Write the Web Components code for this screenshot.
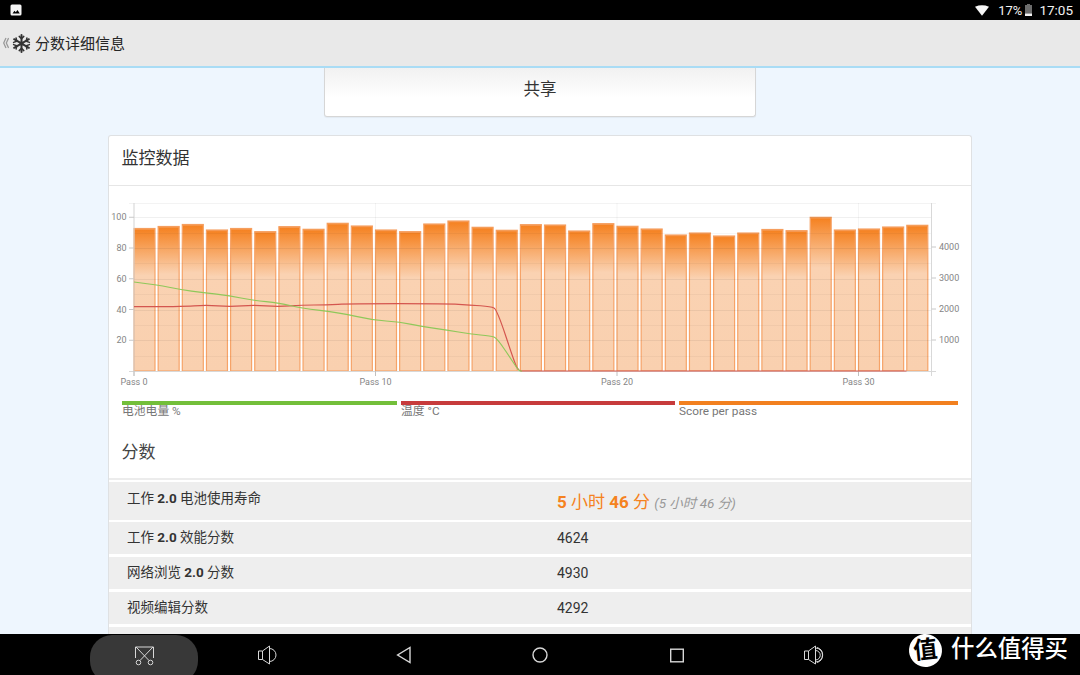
<!DOCTYPE html>
<html lang="zh">
<head>
<meta charset="utf-8">
<title>分数详细信息</title>
<style>
html,body{margin:0;padding:0;background:#000}
body{width:1080px;height:675px;overflow:hidden;font-family:Roboto,"Noto Sans CJK SC",sans-serif}
</style>
</head>
<body>
<app-shell>
  <status-bar></status-bar>
  <action-bar>分数详细信息</action-bar>
  <main-area>
    <share-button>共享</share-button>
    <info-card>
      <card-header>监控数据</card-header>
      <score-chart></score-chart>
      <chart-legend></chart-legend>
      <section-title>分数</section-title>
      <score-table>
        <score-row class="lead" label="工作 |2.0| 电池使用寿命"><b>5</b> 小时 <b>46</b> 分 <i>(5 小时 46 分)</i></score-row>
        <score-row label="工作 |2.0| 效能分数">4624</score-row>
        <score-row label="网络浏览 |2.0| 分数">4930</score-row>
        <score-row label="视频编辑分数">4292</score-row>
        <score-row label=""></score-row>
      </score-table>
    </info-card>
  </main-area>
  <nav-bar></nav-bar>
</app-shell>
<script>
const CJK = 'Roboto,"Noto Sans CJK SC",sans-serif';
function el(name, css, html, extra){
  class C extends HTMLElement{
    constructor(){super();const r=this.attachShadow({mode:'open'});r.innerHTML='<style>'+css+'</style>'+html;}
    connectedCallback(){ if(extra) extra.call(this,this.shadowRoot); }
  }
  customElements.define(name,C);
}
el('app-shell',`:host{display:flex;flex-direction:column;width:1080px;height:675px;position:relative;overflow:hidden;font-family:${CJK}}`,'<slot></slot>');

el('status-bar',`:host{display:flex;align-items:center;height:20px;background:#000;color:#f2f2f2;font-size:14px;flex:none;padding:0 7px 0 10px}
.sp{flex:1}svg{display:block}.pct{margin-left:9px;font-size:13px}.time{margin-left:7px;font-size:13.5px}.bat{margin-left:3px}`,
`<svg width="12" height="12" viewBox="0 0 12 12"><rect x="0.5" y="0.5" width="11" height="11" rx="1.5" fill="#f4f4f4"/><path d="M2.5 9.5 L4.5 6.8 L5.8 8.2 L7.5 6 L9.8 9.5Z" fill="#000"/></svg>
<span class="sp"></span>
<svg width="14" height="11" viewBox="0 0 15 11"><path d="M0 1.5Q7.5-1.5 15 1.5L7.5 11Z" fill="#f6f6f6"/></svg>
<span class="pct">17%</span>
<svg class="bat" width="7" height="12" viewBox="0 0 7 12"><path d="M2 0H5V1H7V12H0V1H2Z" fill="#6c6c6c"/><rect y="9.6" width="7" height="2.4" fill="#f4f4f4"/></svg>
<span class="time">17:05</span>`);

el('action-bar',`:host{display:flex;align-items:center;height:46px;flex:none;background:#e9e9e9;border-bottom:2px solid #a9dcf5;font-size:15px;color:#262626;padding:0 0 0 3px;box-sizing:content-box}
svg{display:block}.flake{margin-left:3px;margin-right:4px}.t{padding-bottom:1px}`,
`<svg width="6" height="12" viewBox="0 0 6 12"><path d="M3 1L.7 6 3 11M5.6 1L3.3 6 5.6 11" fill="none" stroke="#999" stroke-width="1.3"/></svg>
<svg class="flake" width="19" height="19" viewBox="0 0 19 19" fill="none" stroke="#333" stroke-width="2" stroke-linecap="round">
<path d="M9.5 1V18M2.1 5.2L16.9 13.8M2.1 13.8L16.9 5.2"/>
<path stroke-width="1.5" d="M7.2 2.4L9.5 4.6 11.8 2.4M7.2 16.6L9.5 14.4 11.8 16.6M1.6 8.4L4.7 7.2 4.1 4M17.4 10.6L14.3 11.8 14.9 15M1.6 10.6L4.7 11.8 4.1 15M17.4 8.4L14.3 7.2 14.9 4"/>
</svg><span class="t"><slot></slot></span>`);

el('main-area',`:host{display:flex;flex-direction:column;align-items:center;flex:1;min-height:0;overflow:hidden;background:#eef6fe}`,'<slot></slot>');

el('share-button',`:host{display:flex;align-items:center;justify-content:center;flex:none;box-sizing:border-box;width:432px;height:49px;padding-bottom:8px;background:linear-gradient(#f1f1f1,#fff 62%);border:1px solid #d6d6d6;border-top:none;border-radius:0 0 3px 3px;font-size:16.5px;color:#333;box-shadow:0 1px 1px rgba(0,0,0,.05)}`,'<slot></slot>');

el('info-card',`:host{display:block;flex:none;box-sizing:border-box;width:864px;height:520px;margin-top:18px;background:#fff;border:1px solid #dfe1e3;border-bottom:none;border-radius:3px 3px 0 0;overflow:hidden}`,'<slot></slot>');

el('card-header',`:host{display:flex;align-items:center;box-sizing:border-box;height:50px;padding:0 0 9px 12.5px;font-size:17px;color:#333;border-bottom:1px solid #e6e6e6}`,'<slot></slot>');

el('score-chart',`:host{display:block;height:215px}svg{display:block;font-family:Roboto,sans-serif}`,
`<svg id="s" width="862" height="215" viewBox="109 186 862 215"></svg>`,
function(r){
  const svg=r.getElementById('s');
  const tops=[228.5,226.5,224.5,230,228.5,231.7,226.7,229.3,223.3,226,230,231.7,224,221,227.3,230.3,224.7,225,231,223.7,226.3,229,235,233,236,233,229.5,230.7,217.3,230,229,227,225.3];
  const X0=134,P=24.15,B=371,W=21;
  let s=`<defs><linearGradient id="g" x1="0" y1="0" x2="0" y2="1">
  <stop offset="0" stop-color="#f5801e"/><stop offset=".33" stop-color="#fad2b2"/><stop offset="1" stop-color="#f9d0af"/></linearGradient></defs>`;
  s+=`<line x1="129" x2="936" y1="203.5" y2="203.5" stroke="#f3f3f3"/>`;
  let grid='';
  for(let i=1;i<=10;i++){const y=Math.round(B-i*15.375)+.5;grid+=`<line x1="134" x2="931" y1="${y}" y2="${y}" stroke="#000" stroke-opacity="${i%2?.035:.06}"/>`;}
  for(let i=0;i<=3;i++){const x=X0+i*10*P;grid+=`<line x1="${x}" x2="${x}" y1="203" y2="371" stroke="#000" stroke-opacity=".04"/>`;}
  tops.forEach((t,i)=>{const x=X0+i*P;
    s+=`<rect x="${x.toFixed(2)}" y="${t}" width="${W}" height="${B-t}" fill="url(#g)" stroke="#f6a368" stroke-width="1.2"/>`;
    s+=`<rect x="${x.toFixed(2)}" y="${t}" width="${W}" height="1.2" fill="#f69a55"/>`;});
  s+=grid;
  s+=`<path d="M134 203V376M931.5 203V376M129 371.5H936" fill="none" stroke="#d8d8d8" stroke-width="1"/>`;
  for(let v=20;v<=100;v+=20){const y=B-v*1.5375;s+=`<line x1="129" x2="134" y1="${y}" y2="${y}" stroke="#c8c8c8"/><text x="126.5" y="${y+3.2}" text-anchor="end" font-size="9" fill="#858585">${v}</text>`;}
  for(let v=1000;v<=4000;v+=1000){const y=B-v*.031;s+=`<line x1="931.5" x2="936" y1="${y}" y2="${y}" stroke="#c8c8c8"/><text x="939" y="${y+3.2}" font-size="9" fill="#858585">${v}</text>`;}
  for(let i=0;i<=3;i++){const x=X0+i*10*P;s+=`<line x1="${x}" x2="${x}" y1="371" y2="376" stroke="#c0c0c0"/><text x="${x}" y="385" text-anchor="middle" font-size="9" fill="#858585">Pass ${i*10}</text>`;}
  const smooth=a=>{let d=`M${a[0][0]} ${a[0][1]}`;
    for(let i=1;i<a.length-1;i++){const mx=(a[i][0]+a[i+1][0])/2,my=(a[i][1]+a[i+1][1])/2;d+=`Q${a[i][0]} ${a[i][1]} ${mx} ${my}`;}
    const l=a[a.length-1];return d+`L${l[0]} ${l[1]}`;};
  const green=[[134,282],[158,285],[180,289.5],[203,292.7],[230,295.7],[252,300.3],[280,303],[300,308],[340,312.7],[372,320],[400,322],[423,326.7],[447,330],[470,334],[491,336],[497,338],[515,365],[519,371],[522,371]];
  const red=[[134,306.7],[182,306.7],[206,305],[230,306.7],[254,305],[278,306.7],[302,305],[326,305],[350,303.7],[447,303.7],[470,305],[491,306.5],[497,309.5],[515,364],[519,371],[524,371],[906.5,371]];
  s+=`<path d="${smooth(red)}" fill="none" stroke="#d4564f" stroke-width="1.2"/>`;
  s+=`<path d="${smooth(green)}" fill="none" stroke="#8fc85a" stroke-width="1.2"/>`;
  svg.innerHTML=s;
});

el('chart-legend',`:host{display:grid;grid-template-columns:275px 274px 279px;column-gap:4px;padding:0 0 0 13px;font-size:11.8px;color:#777;line-height:14px;height:18px}
.i{border-top:4px solid var(--c)}.i span{display:block;margin-top:-1px}`,
`<div class="i" style="--c:#73bf3a"><span>电池电量 %</span></div><div class="i" style="--c:#c73b3c"><span>温度 °C</span></div><div class="i" style="--c:#f2801f"><span>Score per pass</span></div>`);

el('section-title',`:host{display:flex;align-items:center;box-sizing:border-box;height:61px;padding:4px 0 0 12.5px;font-size:17px;color:#444;border-bottom:2px solid #ececec}`,'<slot></slot>');

el('score-table',`:host{display:flex;flex-direction:column;gap:3px;padding-top:2px}`,'<slot></slot>');

el('score-row',`:host{display:grid;grid-template-columns:430px 1fr;align-items:center;box-sizing:border-box;height:32px;padding-left:18px;padding-bottom:4px;background:#eee;font-size:13.5px;color:#333;flex:none}
:host(.lead){height:37.5px;padding-bottom:0;margin-bottom:-.5px;align-items:start}
.l b{font-weight:700}
.v{font-size:14px;margin-top:4px}
:host(.lead) .l{margin-top:5px}
:host(.lead) .v{font-size:17px;color:#f58220;margin-top:6px}
::slotted(b){font-weight:700}
::slotted(i){font-size:13.5px;color:#999;font-style:italic}`,
`<div class="l" id="l"></div><div class="v"><slot></slot></div>`,
function(r){
  const parts=(this.getAttribute('label')||'').split('|');
  const l=r.getElementById('l');
  parts.forEach((p,i)=>{const n=document.createElement(i%2?'b':'span');n.textContent=p;l.appendChild(n);});
});

el('nav-bar',`:host{display:block;position:relative;height:41px;flex:none;background:#000;border-top:0}
.pill{position:absolute;left:90px;top:1px;width:108px;height:48px;border-radius:22px;background:#383838}
svg{position:absolute;display:block;fill:none;stroke:#d8d8d8;stroke-width:1}
.logo{position:absolute;left:909px;top:0;width:33px;height:33px;border-radius:50%;background:#fff;color:#000;font-size:24px;font-weight:700;line-height:32px;text-align:center;transform:rotate(-6deg)}
.mark{position:absolute;left:951px;top:0;font-size:23.4px;line-height:30px;color:#fff;white-space:nowrap;font-weight:500}`,
`<div class="pill"></div>
<svg style="left:134px;top:11px" width="21" height="21" viewBox="0 0 21 21"><path d="M1.5 13V2H19.5V13M2 2L15 15.5M19 2L6 15.5"/><circle cx="4.5" cy="17.5" r="2.3"/><circle cx="16.5" cy="17.5" r="2.3"/></svg>
<svg style="left:257px;top:11px" width="20" height="20" viewBox="0 0 20 20"><path d="M5.5 6H1.5V14.5H5.5M5.5 6V14.5M5.5 6L12.5 1V19L5.5 14.5M12.5 3.5A6.4 6.4 0 0 1 12.5 16.5"/></svg>
<svg style="left:396px;top:12px" width="16" height="18" viewBox="0 0 16 18"><path stroke-width="1.4" d="M14 1.5V16.5L1.6 9Z"/></svg>
<svg style="left:531px;top:12px" width="18" height="18" viewBox="0 0 18 18"><circle stroke-width="1.4" cx="9" cy="9" r="7"/></svg>
<svg style="left:669px;top:14px" width="16" height="15" viewBox="0 0 16 15"><rect stroke-width="1.4" x="1.7" y="1.2" width="12.6" height="12.6"/></svg>
<svg style="left:803px;top:11px" width="21" height="20" viewBox="0 0 21 20"><path d="M5.5 6H1.5V14.5H5.5M5.5 6V14.5M5.5 6L12.5 1V19L5.5 14.5M12.5 3A7 7 0 0 1 12.5 17M12.5 5.5A4.5 4.5 0 0 1 12.5 15"/><path d="M14 2.5A7.8 7.8 0 0 1 14 17.5"/></svg>
<div class="logo">值</div><div class="mark">什么值得买</div>`);
</script>
</body>
</html>
